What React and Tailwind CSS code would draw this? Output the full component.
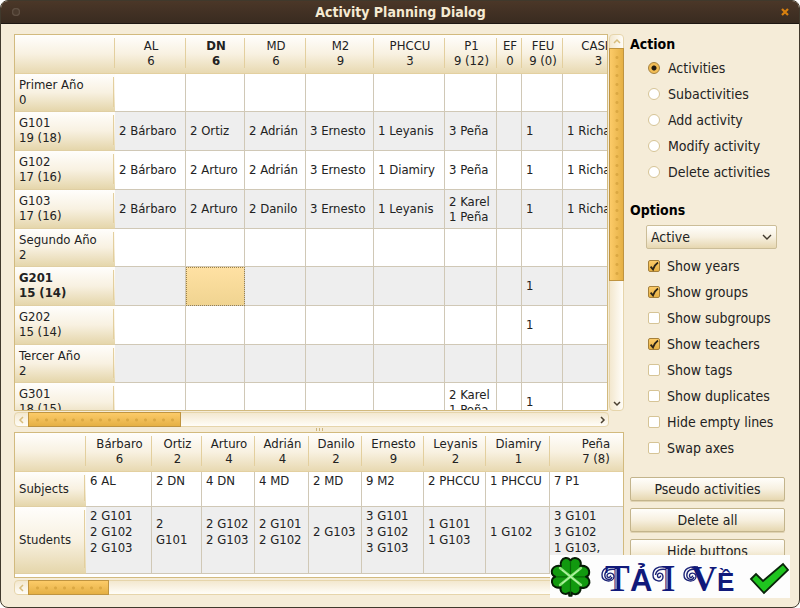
import { useState } from "react";
import clsx from "clsx";

// Main grid: one column per subject, one row per year or group
const subjects = [
  { name: "AL", total: "6", col: "w-[71px]" },
  { name: "DN", total: "6", col: "w-[59px]" },
  { name: "MD", total: "6", col: "w-[61px]" },
  { name: "M2", total: "9", col: "w-[68px]" },
  { name: "PHCCU", total: "3", col: "w-[71px]" },
  { name: "P1", total: "9 (12)", col: "w-[52px]" },
  { name: "EF", total: "0", col: "w-[25px]" },
  { name: "FEU", total: "9 (0)", col: "w-[41px]" },
  { name: "CASIS", total: "3", col: "w-[70px]" },
];

const groups = [
  { name: "Primer Año", total: "0", year: true, cells: [] },
  {
    name: "G101",
    total: "19 (18)",
    cells: ["2 Bárbaro", "2 Ortiz", "2 Adrián", "3 Ernesto", "1 Leyanis", "3 Peña", "", "1", "1 Richard"],
  },
  {
    name: "G102",
    total: "17 (16)",
    cells: ["2 Bárbaro", "2 Arturo", "2 Adrián", "3 Ernesto", "1 Diamiry", "3 Peña", "", "1", "1 Richard"],
  },
  {
    name: "G103",
    total: "17 (16)",
    cells: ["2 Bárbaro", "2 Arturo", "2 Danilo", "3 Ernesto", "1 Leyanis", "2 Karel\n1 Peña", "", "1", "1 Richard"],
  },
  { name: "Segundo Año", total: "2", year: true, cells: [] },
  { name: "G201", total: "15 (14)", cells: ["", "", "", "", "", "", "", "1", ""] },
  { name: "G202", total: "15 (14)", cells: ["", "", "", "", "", "", "", "1", ""] },
  { name: "Tercer Año", total: "2", year: true, cells: [] },
  { name: "G301", total: "18 (15)", cells: ["", "", "", "", "", "2 Karel\n1 Peña", "", "1", ""] },
];

const teachers = [
  { name: "Bárbaro", total: "6", subjects: "6 AL", students: "2 G101\n2 G102\n2 G103", col: "w-[66px]" },
  { name: "Ortiz", total: "2", subjects: "2 DN", students: "2\nG101", col: "w-[50px]" },
  { name: "Arturo", total: "4", subjects: "4 DN", students: "2 G102\n2 G103", col: "w-[53px]" },
  { name: "Adrián", total: "4", subjects: "4 MD", students: "2 G101\n2 G102", col: "w-[54px]" },
  { name: "Danilo", total: "2", subjects: "2 MD", students: "2 G103", col: "w-[53px]" },
  { name: "Ernesto", total: "9", subjects: "9 M2", students: "3 G101\n3 G102\n3 G103", col: "w-[62px]" },
  { name: "Leyanis", total: "2", subjects: "2 PHCCU", students: "1 G101\n1 G103", col: "w-[62px]" },
  { name: "Diamiry", total: "1", subjects: "1 PHCCU", students: "1 G102", col: "w-[64px]" },
  { name: "Peña", total: "7 (8)", subjects: "7 P1", students: "3 G101\n3 G102\n1 G103,", col: "w-[91px]" },
];

const actions = ["Activities", "Subactivities", "Add activity", "Modify activity", "Delete activities"];

const initialOptions = [
  { label: "Show years", on: true },
  { label: "Show groups", on: true },
  { label: "Show subgroups", on: false },
  { label: "Show teachers", on: true },
  { label: "Show tags", on: false },
  { label: "Show duplicates", on: false },
  { label: "Hide empty lines", on: false },
  { label: "Swap axes", on: false },
];

const arrows = {
  left: "M6 2 L3 5 L6 8",
  right: "M4 2 L7 5 L4 8",
  up: "M2 6 L5 3 L8 6",
  down: "M2 3 L5 6 L8 3",
};

const ArrowButton = ({ dir, dim }) => (
  <button
    type="button"
    aria-label={`Scroll ${dir}`}
    className={clsx("flex size-[13px] shrink-0 items-center justify-center", dim ? "text-[#d8bd7c]" : "text-[#4a4031]")}
  >
    <svg viewBox="0 0 10 10" className="size-[10px]" fill="none" stroke="currentColor" strokeWidth="1.5">
      <path d={arrows[dir]} />
    </svg>
  </button>
);

const HorizontalScrollbar = ({ thumb, className }) => (
  <div
    className={clsx(
      "flex h-[15px] shrink-0 rounded-sm border border-[#e6d5ab] bg-linear-to-b from-[#f3e8cf] to-[#fffdf8]",
      className
    )}
  >
    <ArrowButton dir="left" dim />
    <div className="flex-1">
      <div
        className={clsx(
          "-my-px flex h-[15px] items-center border border-[#bf9440] bg-linear-to-b from-[#fccb68] to-[#e5b044] px-1",
          thumb
        )}
      >
        <div className="h-2 flex-1 bg-[radial-gradient(circle,#dba842_0_1px,transparent_2px)] bg-size-[9px_8px]" />
      </div>
    </div>
    <ArrowButton dir="right" />
  </div>
);

const VerticalScrollbar = () => (
  <div className="flex w-[15px] shrink-0 flex-col rounded-sm border border-[#e6d5ab] bg-linear-to-r from-[#f3e8cf] to-[#fffdf8]">
    <ArrowButton dir="up" dim />
    <div className="flex-1">
      <div className="-mx-px flex h-2/3 w-[15px] justify-center border border-[#bf9440] bg-linear-to-r from-[#fccb68] to-[#e5b044] py-1">
        <div className="w-2 bg-[radial-gradient(circle,#dba842_0_1px,transparent_2px)] bg-size-[8px_9px]" />
      </div>
    </div>
    <ArrowButton dir="down" />
  </div>
);

const ColumnHeader = ({ name, total, bold }) => (
  <th
    scope="col"
    className={clsx(
      "h-[39px] border-b border-[#e3d0a0] bg-linear-to-b from-[#fffefc] via-[#f8f1e1] to-[#e8d9b1] p-0 pb-0.5 leading-[15px]",
      bold ? "font-bold" : "font-normal"
    )}
  >
    <div className="border-r border-[#e3cf9e] pl-0.5">
      {name}
      <br />
      {total}
    </div>
  </th>
);

const CornerHeader = () => (
  <td className="h-[39px] border-b border-[#e3d0a0] bg-linear-to-b from-[#fffefc] via-[#f8f1e1] to-[#e8d9b1] p-0 pb-0.5">
    <div className="h-[30px] border-r border-[#e3cf9e]" />
  </td>
);

const RowHeader = ({ children, bold, height }) => (
  <th
    scope="row"
    className={clsx(
      "border-b border-[#e0cfa3] bg-linear-to-b from-[#fffefc] via-[#f8f1e1] to-[#e5d6ab] p-0 pr-px pb-0.5 text-left leading-[15px]",
      bold ? "font-bold" : "font-normal"
    )}
  >
    <div className={clsx("flex items-center border-r border-[#e3cf9e] pl-1", height)}>
      <div>{children}</div>
    </div>
  </th>
);

const SubjectTable = () => {
  const [selected, setSelected] = useState({ row: 5, col: 1 });

  return (
    <table className="w-[618px] table-fixed border-separate border-spacing-0">
      <colgroup>
        <col className="w-[100px]" />
        {subjects.map((s) => (
          <col key={s.name} className={s.col} />
        ))}
      </colgroup>
      <thead>
        <tr>
          <CornerHeader />
          {subjects.map((s, c) => (
            <ColumnHeader key={s.name} name={s.name} total={s.total} bold={c === selected.col} />
          ))}
        </tr>
      </thead>
      <tbody>
        {groups.map((g, r) => (
          <tr key={g.name} className={clsx(g.year ? "h-[38px]" : "h-[39px]", r % 2 ? "bg-[#eeeeee]" : "bg-white")}>
            <RowHeader bold={r === selected.row} height="h-[30px]">
              {g.name}
              <br />
              {g.total}
            </RowHeader>
            {subjects.map((s, c) => (
              <td
                key={s.name}
                onClick={() => setSelected({ row: r, col: c })}
                className={clsx(
                  "border-r border-b border-[#d0c8b6] p-0 pb-px pl-1 leading-[15px] whitespace-pre",
                  r === selected.row &&
                    c === selected.col &&
                    "bg-linear-to-b from-[#ffe1a3] to-[#f0d491] outline-1 -outline-offset-1 outline-dotted outline-[#9c8148]"
                )}
              >
                {g.cells[c]}
              </td>
            ))}
          </tr>
        ))}
      </tbody>
    </table>
  );
};

const TeacherTable = () => (
  <table className="w-[626px] table-fixed border-separate border-spacing-0">
    <colgroup>
      <col className="w-[71px]" />
      {teachers.map((t) => (
        <col key={t.name} className={t.col} />
      ))}
    </colgroup>
    <thead>
      <tr>
        <CornerHeader />
        {teachers.map((t) => (
          <ColumnHeader key={t.name} name={t.name} total={t.total} />
        ))}
      </tr>
    </thead>
    <tbody>
      <tr className="h-[35px] bg-white">
        <RowHeader height="h-[26px]">Subjects</RowHeader>
        {teachers.map((t) => (
          <td key={t.name} className="border-r border-b border-[#d0c8b6] p-0 pb-4 pl-1 leading-4 whitespace-pre">
            {t.subjects}
          </td>
        ))}
      </tr>
      <tr className="h-[67px] bg-[#eeeeee]">
        <RowHeader height="h-[58px]">Students</RowHeader>
        {teachers.map((t) => (
          <td key={t.name} className="border-r border-b border-[#d0c8b6] p-0 pb-4 pl-1 leading-4 whitespace-pre">
            {t.students}
          </td>
        ))}
      </tr>
    </tbody>
  </table>
);

const OptionBox = ({ label, on, onChange }) => (
  <label className="flex h-[26px] items-center gap-[7px]">
    <span className="relative size-3">
      <input
        type="checkbox"
        checked={on}
        onChange={onChange}
        className="peer block size-3 appearance-none rounded-[2px] border border-[#d6c496] bg-white checked:border-[#a5803a] checked:bg-linear-to-b checked:from-[#fccb68] checked:to-[#e5b044]"
      />
      <svg
        viewBox="0 0 12 12"
        className="pointer-events-none absolute inset-0 hidden size-3 peer-checked:block"
        fill="none"
        stroke="#2b2418"
        strokeWidth="1.8"
      >
        <path d="M2.6 6.6 L5 9.4 Q6.6 5 10 2.6" />
      </svg>
    </span>
    {label}
  </label>
);

const PanelButton = ({ children }) => (
  <button
    type="button"
    className="h-6 rounded-[2px] border border-[#c3b48c] bg-linear-to-b from-[#fffefb] via-[#f7f0e0] to-[#e6d7b0] leading-4 shadow-[0_1px_0_#e0d3b2]"
  >
    {children}
  </button>
);

const DownloadBanner = () => (
  <a href="#download" aria-label="TẢI VỀ" className="absolute right-[9px] bottom-[9px] block h-[43px] w-60 bg-[#fdfdfd]">
    <svg viewBox="0 0 240 43" className="block h-[43px] w-60">
      {/* clover */}
      <path
        d="M20.500 5.500 C23 1.500 30 2.500 30.800 8 C31 9.500 30.700 10.500 30.200 11.200 C34.500 10 39 12.500 39.200 17 C39.300 19.500 37.800 21.200 36 21.800 C39.200 23 40.500 27 38.500 30 C36.700 33 32.500 33.500 30.300 32.200 C31.300 35.500 29 39 25.700 39.200 C24 39.300 22.500 38.600 21.600 37.600 L21.600 40.800 L19.200 40.800 L19.200 37.600 C16 40.500 11 38.500 10.500 34.500 C10.400 33.600 10.500 32.800 10.800 32.200 C7 33.500 2.500 31.500 2 27.500 C1.700 24.500 3 22.500 5.200 21.800 C2 20.500 0.900 17 2.300 14.300 C3.900 11 8 10.200 10.900 11.200 C9.800 7.500 11.800 3.500 15.500 3 C17.800 2.800 19.600 4 20.500 5.500 Z"
        fill="#11990f"
        stroke="#061c06"
        strokeWidth="2"
        strokeLinejoin="round"
      />
      <path d="M20.500 6 V19 M20.500 24 V37 M6 21.800 H17 M24 21.800 H35" stroke="#086808" strokeWidth="1.2" />
      <path d="M10 13 L31 30 M31 13 L10 30" stroke="#8be57a" strokeWidth="2.4" strokeLinecap="round" />
      <path d="M12 15 L29 28.500 M29 15 L12 28.500" stroke="#c9f7c0" strokeWidth="0.8" />

      {/* flourishes to the left of T, I and V */}
      <g fill="none" stroke="#1b2377" strokeWidth="1.4">
        <path d="M66 12 C57 11 52 14 52 20 C52 27 63 28 64 22 C64 17 57 17 57 21 C58 24 61 22 60.500 20.500" />
        <path d="M66 14.500 C60 13.500 55 15.500 54.800 20 C55 25 61 26 62 22" />
        <path d="M116 12 C107 11 103 14 103 20 C103 27 113 28 113 22 C113 17 107 17 107.500 21 C108 24 111 22 110.500 20.500" />
        <path d="M116 14.500 C110 13.500 106 15.500 105.500 20" />
        <path d="M148 12 C139 11 134 14 134 20 C134 27 145 28 146 22 C146 17 139 17 139.500 21 C140 24 143 22 142.500 20.500" />
        <path d="M146 14.500 C141 13.500 137 15.500 136.800 20 C137 25 143 26 144 22" />
      </g>
      <text y="36" fill="#10197a" fontWeight="bold">
        <tspan x="55" fontFamily="'Liberation Serif', serif" fontSize="37">T</tspan>
        <tspan x="80" fontFamily="'Liberation Sans', sans-serif" fontSize="31">Ả</tspan>
        <tspan x="111" fontFamily="'Liberation Serif', serif" fontSize="37">I</tspan>
        <tspan x="141" fontFamily="'Liberation Serif', serif" fontSize="36">V</tspan>
        <tspan x="167" fontFamily="'Liberation Sans', sans-serif" fontSize="26">Ề</tspan>
      </text>
      {/* inline highlights on the stems */}
      <path d="M66 14 V34 M117 14 V34" stroke="#fdfdfd" strokeWidth="0.9" />

      {/* tick */}
      <path
        d="M201 24 L206 19 L213 26 L233 9 L238 15 L214 38 Z"
        fill="#1fc41f"
        stroke="#0a240a"
        strokeWidth="1.8"
        strokeLinejoin="miter"
      />
    </svg>
  </a>
);

const App = () => {
  const [action, setAction] = useState("Activities");
  const [options, setOptions] = useState(initialOptions);

  const toggle = (label) => setOptions(options.map((o) => (o.label === label ? { ...o, on: !o.on } : o)));

  return (
    <div className="relative flex h-screen flex-col overflow-hidden rounded-lg border border-[#40392c] bg-[#f5ecd8] font-['DejaVu_Sans_Condensed','DejaVu_Sans',sans-serif] text-[13px] leading-4 text-[#222222]">
      <header className="grid h-[23px] shrink-0 grid-cols-[1fr_auto_1fr] items-center border-b border-[#1d1712] bg-linear-to-b from-[#4b3728] to-[#392b20] pr-2.5 pl-[11px]">
        <button
          type="button"
          aria-label="Window menu"
          className="size-2 rounded-full bg-radial from-[#4a3a2d] from-40% to-[#85776a]"
        />
        <h1 className="text-[14px] font-bold text-[#f5ead2]">Activity Planning Dialog</h1>
        <button type="button" aria-label="Close" className="justify-self-end text-[#d8800f]">
          <svg viewBox="0 0 8 8" className="size-2" stroke="currentColor" strokeWidth="2.2">
            <path d="M1 1 L7 7 M7 1 L1 7" />
          </svg>
        </button>
      </header>

      <main className="flex min-h-0 flex-1 gap-1.5 pt-2.5 pr-3.5 pb-3 pl-[13px]">
        <section className="flex min-w-0 flex-1 flex-col">
          <div className="flex min-h-0 flex-1 gap-px">
            <div className="min-w-0 flex-1 overflow-hidden border border-[#d2ba7e] bg-white">
              <SubjectTable />
            </div>
            <VerticalScrollbar />
          </div>
          <HorizontalScrollbar thumb="w-[27%]" className="mt-px mr-[15px]" />
          <div className="flex h-[5px] shrink-0 items-center justify-center gap-0.5">
            <span className="h-[3px] w-px bg-[#cdb57d]" />
            <span className="h-[3px] w-px bg-[#cdb57d]" />
            <span className="h-[3px] w-px bg-[#cdb57d]" />
          </div>
          <div className="shrink-0 overflow-hidden border border-[#d2ba7e] bg-white pb-[3px]">
            <TeacherTable />
          </div>
          <HorizontalScrollbar thumb="w-[14%]" className="mt-0.5" />
        </section>

        <aside className="flex w-[155px] shrink-0 flex-col text-[14px]">
          <fieldset>
            <legend className="h-[21px] font-bold leading-5 text-black">Action</legend>
            <div className="pl-[18px]">
              {actions.map((name) => (
                <label key={name} className="flex h-[26px] items-center gap-2">
                  <input
                    type="radio"
                    name="action"
                    checked={action === name}
                    onChange={() => setAction(name)}
                    className="size-3 appearance-none rounded-full border border-[#d6c496] bg-white checked:border-[#a5803a] checked:bg-[radial-gradient(circle,#201a10_0_2px,#f2bd55_3px)]"
                  />
                  {name}
                </label>
              ))}
            </div>
          </fieldset>

          <h2 className="mt-[15px] h-5 font-bold leading-5 text-black">Options</h2>
          <div className="mt-[5px] mr-2 ml-4 grid items-center">
            <select
              aria-label="Filter"
              className="col-start-1 row-start-1 h-6 appearance-none rounded-[2px] border border-[#cbbd98] bg-linear-to-b from-[#fffefb] via-[#f7f0e0] to-[#e6d7b0] px-1 leading-4"
            >
              <option>Active</option>
              <option>Inactive</option>
            </select>
            <svg
              viewBox="0 0 10 10"
              className="pointer-events-none col-start-1 row-start-1 mr-[5px] size-[10px] justify-self-end"
              fill="none"
              stroke="#40382c"
              strokeWidth="1.4"
            >
              <path d="M1 3 L5 7 L9 3" />
            </svg>
          </div>
          <div className="mt-1 pl-[18px]">
            {options.map((o) => (
              <OptionBox key={o.label} label={o.label} on={o.on} onChange={() => toggle(o.label)} />
            ))}
          </div>

          <div className="mt-4 flex flex-col gap-[7px]">
            <PanelButton>Pseudo activities</PanelButton>
            <PanelButton>Delete all</PanelButton>
            <PanelButton>Hide buttons</PanelButton>
          </div>
        </aside>
      </main>

      <DownloadBanner />
    </div>
  );
};

export default App;
